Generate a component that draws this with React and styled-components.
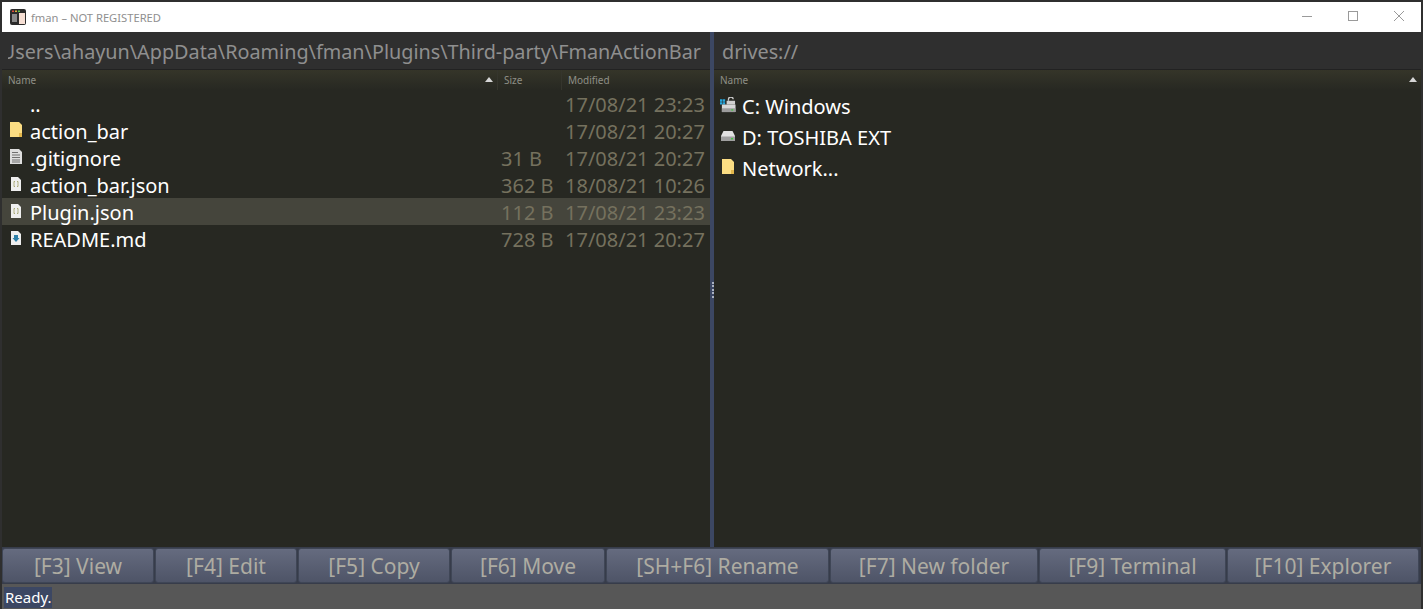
import styled, { createGlobalStyle } from "styled-components";

const GlobalStyle = createGlobalStyle`
    html, body { margin: 0; padding: 0; background: #333; }
    #root { width: 1423px; height: 609px; overflow: hidden; }
`;

const uiFont = `"Noto Sans", "Open Sans", "Liberation Sans", sans-serif`;

const Win = styled.div`
    box-sizing: border-box;
    width: 1423px;
    height: 609px;
    border: solid #2f2f2f;
    border-width: 2px 2px 0 2px;
    display: flex;
    flex-direction: column;
    font-family: ${uiFont};
    background: #272822;
`;

const TitleBar = styled.div`
    height: 30px;
    background: #fff;
    display: flex;
    align-items: center;
    flex: none;
`;
const AppIcon = styled.svg`
    width: 16px;
    height: 16px;
    margin-left: 8px;
    flex: none;
`;
const TitleText = styled.span`
    margin-left: 5px;
    font-size: 11.2px;
    color: #8f8f8f;
`;
const WinButtons = styled.div`
    margin-left: auto;
    margin-right: -1px;
    align-self: flex-start;
    display: flex;
`;
const WinButton = styled.div`
    width: 46px;
    height: 28px;
    display: flex;
    align-items: center;
    justify-content: center;
    svg { width: 12px; height: 12px; stroke: #9a9a9a; fill: none; stroke-width: 1; }
`;

const Panes = styled.div`
    flex: 1;
    display: flex;
    min-height: 0;
`;
const Pane = styled.div`
    flex: ${(props) => props.$width}px 0 0;
    width: ${(props) => props.$width}px;
    display: flex;
    flex-direction: column;
    min-width: 0;
    overflow: hidden;
`;
const Splitter = styled.div`
    width: 4px;
    flex: none;
    background: #3c4763;
    display: flex;
    flex-direction: column;
    align-items: flex-end;
    justify-content: center;
    gap: 1.5px;
`;
const Dot = styled.i`
    width: 2px;
    height: 2px;
    background: #a9b0c0;
`;
const PathBar = styled.div`
    height: 38px;
    flex: none;
    box-sizing: border-box;
    background: #2f2f2f;
    border-bottom: 1px solid #222;
    color: #8f8f8f;
    font-size: 19.8px;
    line-height: 40px;
    padding: ${(props) => (props.$clip ? "0 9px 0 6px" : "0 9px 0 8px")};
`;
const PathClip = styled.div`
    white-space: nowrap;
    overflow: hidden;
    display: flex;
    justify-content: ${(props) => (props.$clip ? "flex-end" : "flex-start")};
`;
const Header = styled.div`
    height: 20px;
    flex: none;
    display: flex;
    background: linear-gradient(#353529, #272822);
    color: #8f8f86;
    font-size: 10px;
    line-height: 20px;
`;
const HeadCell = styled.div`
    box-sizing: border-box;
    position: relative;
    padding-left: 6px;
    width: ${(props) => (props.$w ? `${props.$w}px` : "auto")};
    flex: ${(props) => (props.$w ? "none" : 1)};
    border-right: ${(props) => (props.$line ? "1px solid #35352d" : "none")};
`;
const SortArrow = styled.span`
    position: absolute;
    right: 4px;
    top: 7px;
    width: 0;
    height: 0;
    border: solid transparent;
    border-width: 0 4px 5px 4px;
    border-bottom-color: #d6d6d6;
`;
const Row = styled.div`
    height: ${(props) => props.$h}px;
    flex: none;
    box-sizing: border-box;
    padding-top: 2px;
    display: flex;
    align-items: center;
    background: ${(props) => (props.$active ? "#45453c" : "transparent")};
    font-size: 20px;
`;
const IconSlot = styled.div`
    width: 28px;
    flex: none;
    display: flex;
    justify-content: flex-start;
    padding-left: 6px;
    box-sizing: border-box;
    margin-top: -3px;
    svg { width: 16px; height: 16px; display: block; }
`;
const Name = styled.div`
    flex: 1;
    color: #fff;
    white-space: nowrap;
`;
const Size = styled.div`
    width: 64px;
    box-sizing: border-box;
    padding-left: 3px;
    color: #75715e;
    white-space: nowrap;
`;
const Modified = styled.div`
    width: 148px;
    box-sizing: border-box;
    padding-left: 3px;
    color: #75715e;
    white-space: nowrap;
`;

const ButtonBar = styled.div`
    height: 37px;
    flex: none;
    display: flex;
    gap: 1px;
    background: #373c4a;
    padding: 1px 0;
    box-sizing: border-box;
`;
const FnButton = styled.div`
    width: ${(props) => props.$w}px;
    flex: none;
    box-sizing: border-box;
    border: 1px solid #3f4656;
    border-radius: 3px;
    background: linear-gradient(#656b7f, #4e5467);
    color: #aeaca2;
    font-size: 21px;
    display: flex;
    align-items: center;
    justify-content: center;
    white-space: nowrap;
`;
const StatusBar = styled.div`
    height: 25px;
    flex: none;
    background: #575757;
    display: flex;
    align-items: flex-end;
`;
const StatusText = styled.span`
    background: #3c4763;
    color: #fff;
    font-size: 15px;
    line-height: 21px;
    padding: 0 0 0 1px;
    margin-left: 2px;
    margin-bottom: 1px;
`;

const FolderIcon = () => (
    <svg viewBox="0 0 16 16">
        <path d="M2 0h9l3 3v12H2z" fill="#fbdd83" />
        <path d="M11 15v-4h3v4z" fill="#e3b74c" />
    </svg>
);
const TextIcon = () => (
    <svg viewBox="0 0 16 16">
        <path d="M2 0h9l3 3v12H2z" fill="#dedede" />
        <path d="M4 3.500h6M4 6h8M4 8.500h8M4 11h8M4 13h8" stroke="#6f6f6f" strokeWidth="1" />
    </svg>
);
const JsonIcon = () => (
    <svg viewBox="0 0 16 16">
        <path d="M3 1h7l3 3v11H3z" fill="#eeeeee" />
        <path d="M7 5.500H6v2L5.500 8l.5.5v2h1M9 5.500h1v2l.5.5-.5.5v2H9" stroke="#9a9a5c" strokeWidth="0.8" fill="none" />
    </svg>
);
const MdIcon = () => (
    <svg viewBox="0 0 16 16">
        <path d="M3 1h7l3 3v11H3z" fill="#eeeeee" />
        <path d="M6 5h4v3h1.500L8 12 4.500 8H6z" fill="#2d7fa8" />
    </svg>
);
const WindowsDriveIcon = () => (
    <svg viewBox="0 0 17 17">
        <path d="M0 2.500h2.500V5H0zM3 2.500h2.500V5H3zM0 5.500h2.500V8H0zM3 5.500h2.500V8H3z" fill="#28a8e0" />
        <path d="M9 4V2.500a2.500 2.500 0 0 1 5 0" stroke="#c9c9c9" strokeWidth="1.400" fill="none" />
        <path d="M7 4h9v4H7z" fill="#d0d0d0" />
        <path d="M2 8h14.500v8H2z" fill="#d8d8d8" />
        <path d="M2 12h14.500v4H2z" fill="#9c9c9c" />
        <path d="M12 13h2v1.500h-2z" fill="#44c944" />
    </svg>
);
const DriveIcon = () => (
    <svg viewBox="0 0 16 16">
        <path d="M3.500 3h9L15 8v5H1V8z" fill="#e2e2e2" />
        <path d="M1 8.500h14V13H1z" fill="#a0a0a0" />
        <path d="M11 10h2v1.500h-2z" fill="#44c944" />
    </svg>
);

const files = [
    { name: "..", modified: "17/08/21 23:23" },
    { name: "action_bar", icon: <FolderIcon />, modified: "17/08/21 20:27" },
    { name: ".gitignore", icon: <TextIcon />, size: "31 B", modified: "17/08/21 20:27" },
    { name: "action_bar.json", icon: <JsonIcon />, size: "362 B", modified: "18/08/21 10:26" },
    { name: "Plugin.json", icon: <JsonIcon />, size: "112 B", modified: "17/08/21 23:23", active: true },
    { name: "README.md", icon: <MdIcon />, size: "728 B", modified: "17/08/21 20:27" },
];
const drives = [
    { name: "C: Windows", icon: <WindowsDriveIcon /> },
    { name: "D: TOSHIBA EXT", icon: <DriveIcon /> },
    { name: "Network...", icon: <FolderIcon /> },
];
const buttons = [
    ["[F3] View", 152],
    ["[F4] Edit", 142],
    ["[F5] Copy", 152],
    ["[F6] Move", 154],
    ["[SH+F6] Rename", 223],
    ["[F7] New folder", 208],
    ["[F9] Terminal", 187],
    ["[F10] Explorer", 192],
];

export default function App() {
    return (
        <Win>
            <GlobalStyle />
            <TitleBar>
                <AppIcon viewBox="0 0 16 16">
                    <rect width="16" height="16" rx="2" fill="#2b2b2b" />
                    <rect x="2" y="1.500" width="2" height="1.500" fill="#e04a3a" />
                    <rect x="5" y="1.500" width="2" height="1.500" fill="#e0b03a" />
                    <rect x="8" y="1.500" width="2" height="1.500" fill="#5cc04a" />
                    <rect x="9" y="4" width="6" height="11" fill="#f6dfd4" />
                    <path d="M2 6h5M2 8h5M2 10h5M2 12h5" stroke="#e8e8e8" strokeWidth="1" />
                </AppIcon>
                <TitleText>fman – NOT REGISTERED</TitleText>
                <WinButtons>
                    <WinButton>
                        <svg viewBox="0 0 12 12"><path d="M1 6.500h10" /></svg>
                    </WinButton>
                    <WinButton>
                        <svg viewBox="0 0 12 12"><rect x="1.500" y="1.500" width="9" height="9" /></svg>
                    </WinButton>
                    <WinButton>
                        <svg viewBox="0 0 12 12"><path d="M1 1l10 10M11 1L1 11" /></svg>
                    </WinButton>
                </WinButtons>
            </TitleBar>
            <Panes>
                <Pane $width={708}>
                    <PathBar $clip>
                        <PathClip $clip>
                            <span>C:\Users\ahayun\AppData\Roaming\fman\Plugins\Third-party\FmanActionBar</span>
                        </PathClip>
                    </PathBar>
                    <Header>
                        <HeadCell $line>Name<SortArrow /></HeadCell>
                        <HeadCell $w={64} $line>Size</HeadCell>
                        <HeadCell $w={148}>Modified</HeadCell>
                    </Header>
                    {files.map((file) => (
                        <Row key={file.name} $h={27} $active={file.active}>
                            <IconSlot>{file.icon}</IconSlot>
                            <Name>{file.name}</Name>
                            <Size>{file.size}</Size>
                            <Modified>{file.modified}</Modified>
                        </Row>
                    ))}
                </Pane>
                <Splitter>
                    <Dot /><Dot /><Dot /><Dot /><Dot />
                </Splitter>
                <Pane $width={707}>
                    <PathBar>
                        <PathClip>drives://</PathClip>
                    </PathBar>
                    <Header>
                        <HeadCell>Name<SortArrow /></HeadCell>
                    </Header>
                    {drives.map((drive) => (
                        <Row key={drive.name} $h={31}>
                            <IconSlot>{drive.icon}</IconSlot>
                            <Name>{drive.name}</Name>
                        </Row>
                    ))}
                </Pane>
            </Panes>
            <ButtonBar>
                {buttons.map(([label, w]) => (
                    <FnButton key={label} $w={w}>{label}</FnButton>
                ))}
            </ButtonBar>
            <StatusBar>
                <StatusText>Ready.</StatusText>
            </StatusBar>
        </Win>
    );
}
